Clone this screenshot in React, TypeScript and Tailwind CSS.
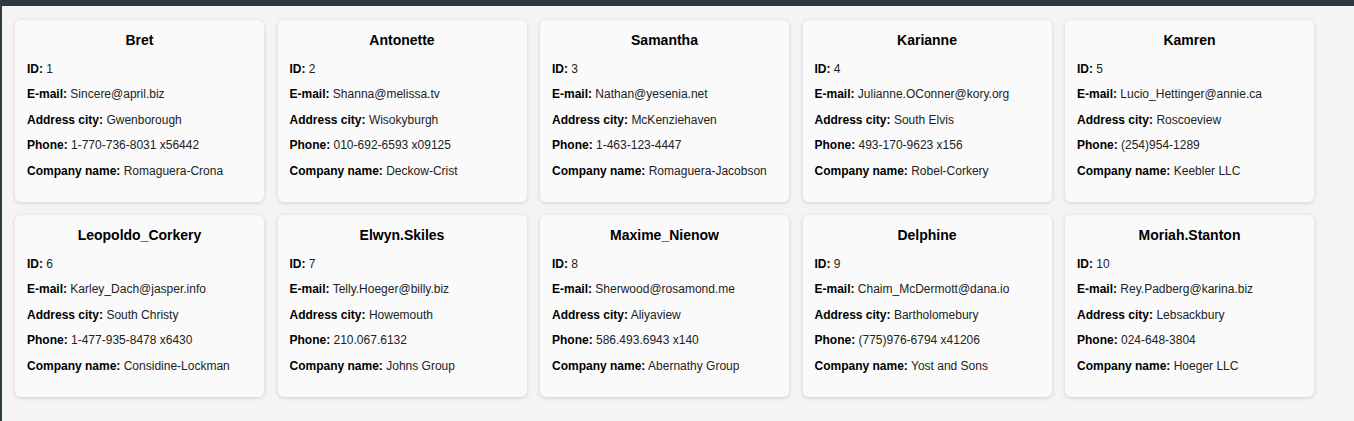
const users = [
  { id: 1, username: 'Bret', email: 'Sincere@april.biz', city: 'Gwenborough', phone: '1-770-736-8031 x56442', company: 'Romaguera-Crona' },
  { id: 2, username: 'Antonette', email: 'Shanna@melissa.tv', city: 'Wisokyburgh', phone: '010-692-6593 x09125', company: 'Deckow-Crist' },
  { id: 3, username: 'Samantha', email: 'Nathan@yesenia.net', city: 'McKenziehaven', phone: '1-463-123-4447', company: 'Romaguera-Jacobson' },
  { id: 4, username: 'Karianne', email: 'Julianne.OConner@kory.org', city: 'South Elvis', phone: '493-170-9623 x156', company: 'Robel-Corkery' },
  { id: 5, username: 'Kamren', email: 'Lucio_Hettinger@annie.ca', city: 'Roscoeview', phone: '(254)954-1289', company: 'Keebler LLC' },
  { id: 6, username: 'Leopoldo_Corkery', email: 'Karley_Dach@jasper.info', city: 'South Christy', phone: '1-477-935-8478 x6430', company: 'Considine-Lockman' },
  { id: 7, username: 'Elwyn.Skiles', email: 'Telly.Hoeger@billy.biz', city: 'Howemouth', phone: '210.067.6132', company: 'Johns Group' },
  { id: 8, username: 'Maxime_Nienow', email: 'Sherwood@rosamond.me', city: 'Aliyaview', phone: '586.493.6943 x140', company: 'Abernathy Group' },
  { id: 9, username: 'Delphine', email: 'Chaim_McDermott@dana.io', city: 'Bartholomebury', phone: '(775)976-6794 x41206', company: 'Yost and Sons' },
  { id: 10, username: 'Moriah.Stanton', email: 'Rey.Padberg@karina.biz', city: 'Lebsackbury', phone: '024-648-3804', company: 'Hoeger LLC' },
];

function Row({ label, value, first }: { label: string; value: string | number; first?: boolean }) {
  return (
    <p className={`${first ? 'mt-[13.5px]' : 'mt-[11.5px]'} text-[12px] leading-[14px] text-[#222] whitespace-nowrap`}>
      <span className="font-bold text-black">{label}:</span> {value}
    </p>
  );
}

export default function App() {
  return (
    <div
      className="min-h-[421px] bg-[#f4f4f4] border-t-[6px] border-l-2 border-[#2b3a43] pt-[14px] pl-[13px] pr-[13px]"
      style={{ fontFamily: '"Liberation Sans", Arial, sans-serif' }}
    >
      <div className="flex flex-wrap gap-x-[13.5px] gap-y-[13px]">
        {users.map((u) => (
          <div
            key={u.id}
            className="w-[249px] h-[182px] bg-[#fafafa] rounded-md shadow-[0_1px_4px_rgba(0,0,0,0.15)] px-3 pt-3"
          >
            <h2 className="text-center text-[14px] leading-4 font-bold text-black">{u.username}</h2>
            <Row label="ID" value={u.id} first />
            <Row label="E-mail" value={u.email} />
            <Row label="Address city" value={u.city} />
            <Row label="Phone" value={u.phone} />
            <Row label="Company name" value={u.company} />
          </div>
        ))}
      </div>
    </div>
  );
}
